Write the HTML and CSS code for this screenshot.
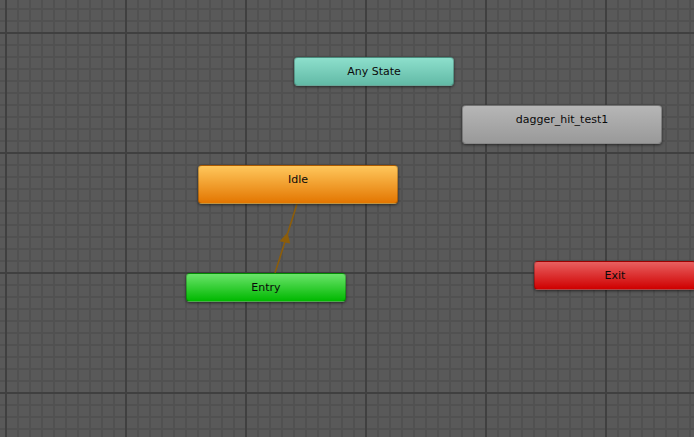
FILE: index.html
```html
<!DOCTYPE html>
<html>
<head>
<meta charset="utf-8">
<link rel="stylesheet" href="styles.css">
</head>
<body>
<div class="canvas">
  <svg class="links" width="694" height="437" viewBox="0 0 694 437">
    <line x1="275" y1="273" x2="297" y2="204" class="link"/>
    <polygon points="287.5,232.5 279.6,241.2 290.2,243.4" class="arrow"/>
  </svg>
  <div class="node any" style="left:294px;top:57px;width:160px;height:29px">Any State</div>
  <div class="node state gray" style="left:462px;top:105px;width:200px;height:39px">dagger_hit_test1</div>
  <div class="node state orange" style="left:198px;top:165px;width:200px;height:39px">Idle</div>
  <div class="node entry" style="left:186px;top:273px;width:160px;height:29px">Entry</div>
  <div class="node exit" style="left:534px;top:261px;width:162px;height:29px">Exit</div>
</div>
</body>
</html>
```
FILE: styles.css
```css
html, body {
  margin: 0;
  padding: 0;
  width: 694px;
  height: 437px;
  overflow: hidden;
  background: #595959;
}
.canvas {
  position: relative;
  width: 694px;
  height: 437px;
  background-color: #595959;
  background-image:
    linear-gradient(to right, #404040 0, #404040 2px, transparent 2px),
    linear-gradient(to bottom, #404040 0, #404040 2px, transparent 2px),
    linear-gradient(to right, #515151 0, #515151 2px, transparent 2px),
    linear-gradient(to bottom, #515151 0, #515151 2px, transparent 2px);
  background-size: 120px 100%, 100% 120px, 12px 100%, 100% 12px;
  background-position: 5px 0, 0 32px, 5px 0, 0 8px;
  font-family: "DejaVu Sans", Verdana, sans-serif;
  font-size: 11px;
  color: #0a0a0a;
}
.links {
  position: absolute;
  left: 0;
  top: 0;
}
.link {
  stroke: #8c5d0a;
  stroke-width: 1.6;
}
.arrow {
  fill: #8c5d0a;
}
.node {
  position: absolute;
  box-sizing: border-box;
  border-radius: 4px;
  display: flex;
  justify-content: center;
  align-items: center;
  box-shadow: 0 1px 3px rgba(0,0,0,0.55);
  border: 1px solid rgba(0,0,0,0.25);
}
.node.state {
  align-items: flex-start;
  padding-top: 7px;
}
.any {
  background: linear-gradient(to bottom, #8ddfcc, #62baa6);
}
.gray {
  background: linear-gradient(to bottom, #b6b6b6, #999999);
}
.orange {
  background: linear-gradient(to bottom, #ffc75c, #e37600);
}
.entry {
  background: linear-gradient(to bottom, #6ae46a, #00b800);
}
.exit {
  background: linear-gradient(to bottom, #e86060, #cf0000);
}
```
